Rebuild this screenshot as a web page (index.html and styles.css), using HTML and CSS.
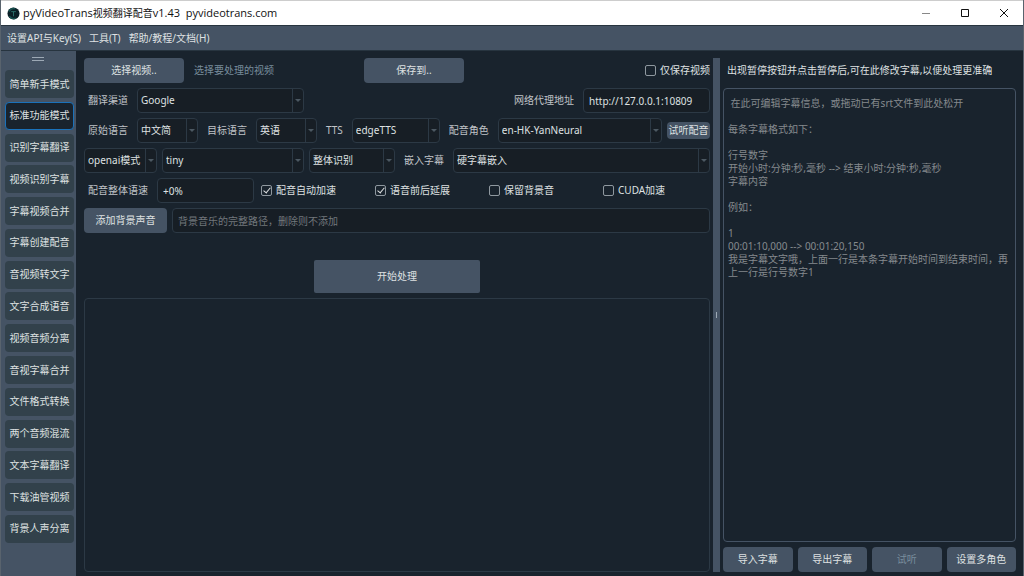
FILE: index.html
```html
<!DOCTYPE html>
<html lang="zh-CN">
<head>
<meta charset="utf-8">
<title>pyVideoTrans视频翻译配音v1.43</title>
<link rel="stylesheet" href="styles.css">
</head>
<body>
<div class="window">
  <header class="titlebar">
    <svg class="logo" viewBox="0 0 14 14" aria-hidden="true"><circle cx="7" cy="7" r="6.5" fill="#0a1f26"/><path d="M2 5a6 6 0 0 1 7-3M2.500 10a6 6 0 0 0 7 2" stroke="#17504f" stroke-width="1.500" fill="none"/><path d="M4.500 5h5M7 5v5" stroke="#2c716d" fill="none"/></svg>
    <h1 class="title"><span class="title-latin">pyVideoTrans</span>视频翻译配音<span class="title-latin">v1.43 &nbsp;pyvideotrans.com</span></h1>
    <div class="window-controls">
      <button class="window-button" aria-label="最小化"><svg viewBox="0 0 10 10"><path d="M1 5.500h8" stroke="#888"/></svg></button>
      <button class="window-button" aria-label="最大化"><svg viewBox="0 0 10 10"><path d="M1.500 1.500h7v7h-7z" stroke="#111" fill="none"/></svg></button>
      <button class="window-button" aria-label="关闭"><svg viewBox="0 0 10 10"><path d="M1 1l8 8M9 1l-8 8" stroke="#111"/></svg></button>
    </div>
  </header>
  <nav class="menubar">
    <button class="menu">设置API与Key(S)</button>
    <button class="menu">工具(T)</button>
    <button class="menu">帮助/教程/文档(H)</button>
  </nav>
  <div class="workspace">
    <aside class="sidebar">
      <div class="grip"></div>
      <div class="modes">
        <button class="mode">简单新手模式</button>
        <button class="mode mode-active">标准功能模式</button>
        <button class="mode">识别字幕翻译</button>
        <button class="mode">视频识别字幕</button>
        <button class="mode">字幕视频合并</button>
        <button class="mode">字幕创建配音</button>
        <button class="mode">音视频转文字</button>
        <button class="mode">文字合成语音</button>
        <button class="mode">视频音频分离</button>
        <button class="mode">音视字幕合并</button>
        <button class="mode">文件格式转换</button>
        <button class="mode">两个音频混流</button>
        <button class="mode">文本字幕翻译</button>
        <button class="mode">下载油管视频</button>
        <button class="mode">背景人声分离</button>
      </div>
    </aside>
    <main class="main">
      <div class="row">
        <button class="button button-file">选择视频..</button>
        <span class="file-hint">选择要处理的视频</span>
        <button class="button button-file">保存到..</button>
        <label class="check push"><input type="checkbox">仅保存视频</label>
      </div>
      <div class="row">
        <label class="label" for="channel">翻译渠道</label>
        <span class="select select-channel"><select id="channel"><option>Google</option></select></span>
        <label class="label push" for="proxy">网络代理地址</label>
        <input class="input input-proxy" id="proxy" type="text" value="http://127.0.0.1:10809">
      </div>
      <div class="row">
        <label class="label" for="source">原始语言</label>
        <span class="select select-language"><select id="source"><option>中文简</option></select></span>
        <label class="label" for="target">目标语言</label>
        <span class="select select-language"><select id="target"><option>英语</option></select></span>
        <label class="label" for="tts">TTS</label>
        <span class="select select-tts"><select id="tts"><option>edgeTTS</option></select></span>
        <label class="label" for="role">配音角色</label>
        <span class="select grow"><select id="role"><option>en-HK-YanNeural</option></select></span>
        <button class="button button-small">试听配音</button>
      </div>
      <div class="row">
        <span class="select select-engine"><select aria-label="识别引擎"><option>openai模式</option></select></span>
        <span class="select select-model"><select aria-label="模型"><option>tiny</option></select></span>
        <span class="select select-split"><select aria-label="识别方式"><option>整体识别</option></select></span>
        <label class="label" for="embed">嵌入字幕</label>
        <span class="select grow"><select id="embed"><option>硬字幕嵌入</option></select></span>
      </div>
      <div class="row">
        <label class="label" for="rate">配音整体语速</label>
        <input class="input input-rate" id="rate" type="text" value="+0%">
        <div class="checks">
          <label class="check"><input type="checkbox" checked>配音自动加速</label>
          <label class="check"><input type="checkbox" checked>语音前后延展</label>
          <label class="check"><input type="checkbox">保留背景音</label>
          <label class="check"><input type="checkbox">CUDA加速</label>
        </div>
      </div>
      <div class="row">
        <button class="button button-music">添加背景声音</button>
        <input class="input grow" type="text" aria-label="背景音乐" placeholder="背景音乐的完整路径，删除则不添加">
      </div>
      <button class="button button-start">开始处理</button>
      <textarea class="log" aria-label="处理日志" readonly></textarea>
    </main>
    <div class="splitter"></div>
    <section class="subtitles">
      <label class="subtitles-title" for="subtitle-text">出现暂停按钮并点击暂停后,可在此修改字幕,以便处理更准确</label>
      <textarea class="editor" id="subtitle-text" placeholder=" 在此可编辑字幕信息，或拖动已有srt文件到此处松开

每条字幕格式如下：

行号数字
开始小时:分钟:秒,毫秒 --> 结束小时:分钟:秒,毫秒
字幕内容

例如：

1
00:01:10,000 --> 00:01:20,150
我是字幕文字哦，上面一行是本条字幕开始时间到结束时间，再上一行是行号数字1"></textarea>
      <div class="actions">
        <button class="button">导入字幕</button>
        <button class="button">导出字幕</button>
        <button class="button" disabled>试听</button>
        <button class="button">设置多角色</button>
      </div>
    </section>
  </div>
</div>
</body>
</html>
```
FILE: styles.css
```css
* { box-sizing: border-box; }

body {
  margin: 0;
  background: #19232d;
  color: #dfe1e2;
  font: 10px/13px "Noto Sans", "Noto Sans CJK SC", sans-serif;
}

button, input, select, textarea {
  margin: 0;
  font: inherit;
  color: inherit;
}

.window {
  display: flex;
  flex-direction: column;
  min-height: 100vh;
  border: solid #59636d;
  border-width: 0 1px;
}

.titlebar {
  display: flex;
  align-items: center;
  height: 25px;
  padding-left: 6px;
  border-top: 1px solid #cdcdcd;
  background: #fff;
  color: #111;
}

.logo { width: 13px; height: 13px; }

.title {
  margin: 0 0 0 3px;
  font-size: 10px;
  font-weight: 400;
  line-height: 16px;
}

.title-latin { font-family: "Open Sans", sans-serif; font-size: 11px; }

.window-controls { display: flex; margin-left: auto; }

.window-button {
  display: flex;
  align-items: center;
  justify-content: center;
  width: 39px;
  height: 24px;
  padding: 0;
  border: 0;
  background: none;
}

.window-button svg { width: 10px; height: 10px; }

.menubar {
  display: flex;
  gap: 8px;
  height: 26px;
  padding-left: 6px;
  border: solid #27343f;
  border-width: 1px 0;
  background: #455364;
}

.menu {
  padding: 0;
  border: 0;
  background: none;
}

.workspace { display: flex; flex: 1; }

.sidebar {
  flex: none;
  width: 75px;
  padding: 6px 2px 0 4px;
  background: #455364;
}

.grip {
  width: 12px;
  height: 4px;
  margin: 0 auto 9px 27px;
  border: solid #9da9b5;
  border-width: 1px 0;
}

.modes {
  display: flex;
  flex-direction: column;
  justify-content: space-between;
  height: 473px;
}

.mode {
  height: 28px;
  padding: 0;
  border: 0;
  border-radius: 4px;
  background: #32414b;
}

.mode-active {
  border: 1px solid #1a72bb;
  background: #19232d;
}

.main {
  display: flex;
  flex: 1;
  flex-direction: column;
  gap: 5px;
  min-width: 0;
  padding: 7px 3px 4px 8px;
}

.row { display: flex; align-items: center; gap: 5px; height: 25px; }
.grow { flex: 1; min-width: 0; }
.push { margin-left: auto; }

.label { padding: 0 4px; color: #c0c4c8; white-space: nowrap; }

.button {
  height: 25px;
  padding: 0;
  border: 0;
  border-radius: 4px;
  background: #455364;
  white-space: nowrap;
}

.button:disabled { color: #788d9c; }
.button-file { width: 100px; }
.button-music { width: 83px; }
.button-small { width: 43px; height: 17px; }

.button-start {
  align-self: center;
  width: 166px;
  height: 33px;
  margin-top: 22px;
  border-radius: 2px;
}

.file-hint { width: 170px; padding-left: 5px; color: #788d9c; }

.input {
  height: 25px;
  padding: 0 5px;
  border: 1px solid #2c3945;
  border-radius: 4px;
  background: #171e25;
}

.input::placeholder { color: #72777c; }
.input-proxy { width: 127px; }
.input-rate { width: 97px; }

.select { position: relative; display: flex; }

.select select {
  width: 100%;
  height: 25px;
  padding: 0 14px 0 3px;
  border: 1px solid #2c3945;
  border-radius: 4px;
  background: #171e25;
  appearance: none;
}

.select::before {
  content: "";
  position: absolute;
  top: 1px;
  right: 11px;
  bottom: 1px;
  border-left: 1px solid #2c3945;
}

.select::after {
  content: "";
  position: absolute;
  top: 11px;
  right: 3px;
  border: solid transparent;
  border-width: 3px 3px 0;
  border-top-color: #4c5862;
}

.select-channel { width: 167px; }
.select-language { width: 61px; }
.select-tts { width: 88px; }
.select-split { width: 86px; }
.select-engine { width: 73px; }
.select-model { width: 142px; }

.checks {
  display: grid;
  flex: 1;
  grid-template-columns: repeat(3, 114px) 1fr;
  padding-left: 2px;
}

.check { display: flex; align-items: center; gap: 4px; white-space: nowrap; }

.check input {
  width: 11px;
  height: 11px;
  border: 1px solid #8f989f;
  border-radius: 2px;
  background: none;
  appearance: none;
}

.check input:checked::before {
  content: "";
  display: block;
  width: 3px;
  height: 6px;
  margin: 0 3px;
  border: solid #dfe1e2;
  border-width: 0 1px 1px 0;
  transform: rotate(40deg);
}

.log, .editor {
  display: block;
  width: 100%;
  flex: 1;
  border: 1px solid #2c3945;
  border-radius: 4px;
  background: none;
  resize: none;
}

.editor { padding: 8px 4px; border-color: #455364; }
.editor::placeholder { color: #858a8e; }

.splitter {
  display: flex;
  align-items: center;
  justify-content: center;
  flex: none;
  width: 7px;
  margin: 7px 0 4px;
  background: #455364;
}

.splitter::before {
  content: "";
  width: 1px;
  height: 6px;
  background: #9da9b5;
}

.subtitles {
  display: flex;
  flex: none;
  flex-direction: column;
  gap: 5px;
  width: 303px;
  padding: 7px 7px 4px 3px;
}

.subtitles-title {
  height: 25px;
  padding-left: 4px;
  line-height: 25px;
  white-space: nowrap;
}

.actions {
  display: grid;
  grid-template-columns: repeat(4, 1fr);
  gap: 5px;
}
```
